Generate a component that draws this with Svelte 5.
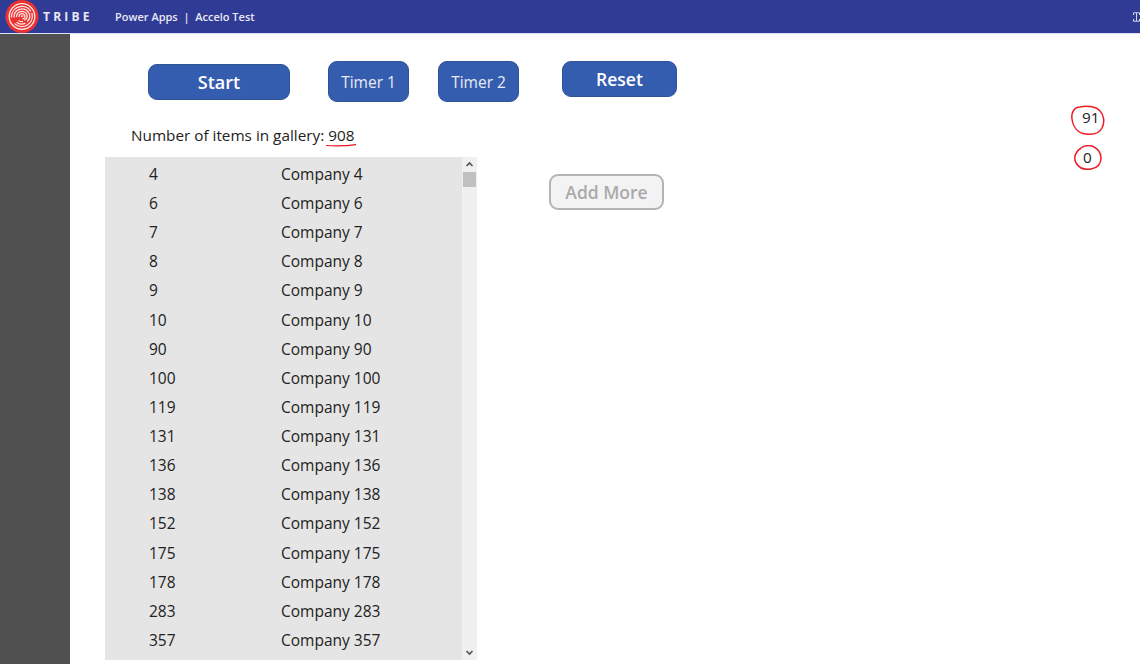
<script>
    let ids = [4, 6, 7, 8, 9, 10, 90, 100, 119, 131, 136, 138, 152, 175, 178, 283, 357]
</script>

<div class='page'>
    <header>
        <svg class='logo' width='34' height='33' viewBox='0 0 34 33'>
            <circle cx='17' cy='16.500' r='16.500' fill='#ea3230'/>
            <g fill='none' stroke='#ffe9e6' stroke-width='1.300' stroke-linecap='round'>
                <circle cx='17' cy='16.500' r='12.800'/>
                <path d='M6.500 17a10.500 10.500 0 0 1 19-6.200'/>
                <path d='M27 13.500a10.500 10.500 0 0 1-17 10.500'/>
                <path d='M9 17a8 8 0 0 1 14.500-4.600 6 6 0 0 1-1 8.600'/>
                <path d='M20 23.400a8 8 0 0 1-8-1'/>
                <path d='M11.500 16.500a5.500 5.500 0 0 1 10-2.800c1 2.300.4 5-1.800 6.200'/>
                <path d='M17.500 21.700a5.500 5.500 0 0 1-3.500-1'/>
                <path d='M14 16.500a3 3 0 0 1 5.700-1.200c.6 1.500-.2 3-1.700 3.500'/>
                <path d='M16.500 16.500a1 1 0 0 1 1.500-.5'/>
            </g>
        </svg>
        <span class='brand'>TRIBE</span>
        <span class='title'>Power Apps &nbsp;|&nbsp; Accelo Test</span>
        <svg class='corner' width='7' height='10' viewBox='0 0 7 10'>
            <path d='M.5 3V.8h6V3M.5 7v2.200h6V7M3.500 1v8' fill='none' stroke='#d5d7e8' stroke-width='1'/>
        </svg>
    </header>
    <div class='body'>
        <aside></aside>
        <main>
            <div class='toolbar'>
                <button class='start'>Start</button>
                <button class='timer'>Timer 1</button>
                <button class='timer second'>Timer 2</button>
                <button class='reset'>Reset</button>
            </div>
            <p class='count'>Number of items in gallery: <span class='total'>908
                <svg class='underline' width='32' height='4' viewBox='0 0 32 4'>
                    <path d='M1 2.500c8 .5 20 .5 30-.9' fill='none' stroke='#e8141c' stroke-width='1.200'/>
                </svg>
            </span></p>
            <div class='lower'>
                <div class='gallery'>
                    <div class='rows'>
                        {#each ids as id (id)}
                            <div class='row'>
                                <span class='id'>{id}</span>
                                <span>Company {id}</span>
                            </div>
                        {/each}
                    </div>
                    <div class='scrollbar'>
                        <svg width='15' height='15' viewBox='0 0 15 15'>
                            <path d='M4.500 9 7.500 6l3 3' fill='none' stroke='#555' stroke-width='1.700'/>
                        </svg>
                        <div class='thumb'></div>
                        <svg class='down' width='15' height='15' viewBox='0 0 15 15'>
                            <path d='M4.500 6l3 3 3-3' fill='none' stroke='#555' stroke-width='1.700'/>
                        </svg>
                    </div>
                </div>
                <button class='more' disabled>Add More</button>
            </div>
            <div class='marks'>
                <div class='mark first'>
                    91
                    <svg width='36' height='32' viewBox='0 0 36 32'>
                        <path d='M10 2C4 2 1 8 2 14c1 8 6 14 14 15 7 1 13 0 16-6 3-6 2-13-2-17C27 2 18 0 10 2' fill='none' stroke='#ef1c24' stroke-width='1.500'/>
                    </svg>
                </div>
                <div class='mark second'>
                    0
                    <svg width='30' height='26' viewBox='0 0 30 26'>
                        <path d='M8 3C3 6 0 12 3 18c3 5 9 7 15 6 6-1 10-5 10-11 0-6-4-10-9-12C15 0 11 1 8 3' fill='none' stroke='#ef1c24' stroke-width='1.500'/>
                    </svg>
                </div>
            </div>
        </main>
    </div>
</div>

<style>
    :global(body) {
        margin: 0;
        background: #fff;
        overflow: hidden;
    }
    .page {
        height: 664px;
        display: flex;
        flex-direction: column;
        font-family: "Open Sans", sans-serif;
        color: #222;
        font-size: 15.300px;
    }
    header {
        height: 33px;
        flex: none;
        display: flex;
        align-items: center;
        background: #303b96;
        border-bottom: 1px solid #dfe1ef;
        color: #e8e9f4;
        padding-left: 5px;
        padding-right: 0;
    }
    .brand {
        margin-left: 4px;
        font-size: 12px;
        font-weight: 700;
        letter-spacing: 3.200px;
        width: 72px;
    }
    .title {
        font-size: 11px;
        font-weight: 600;
    }
    .corner {
        margin-left: auto;
    }
    .body {
        flex: 1;
        display: flex;
        min-height: 0;
    }
    aside {
        width: 70px;
        background: #505050;
    }
    main {
        flex: 1;
        position: relative;
    }
    .toolbar {
        display: flex;
        align-items: flex-start;
        padding: 27px 0 0 78px;
    }
    button {
        font-family: inherit;
        background: #355daf;
        color: #fff;
        border: 1px solid #2f5299;
        border-radius: 9px;
        padding: 0;
    }
    .start {
        width: 142px;
        height: 36px;
        margin-top: 3px;
        font-size: 18px;
        font-weight: 600;
    }
    .timer {
        width: 81px;
        height: 41px;
        margin-left: 38px;
        font-size: 15.500px;
        color: #e8ecf6;
    }
    .timer.second {
        margin-left: 29px;
    }
    .reset {
        width: 115px;
        height: 36px;
        margin-left: 43px;
        font-size: 17.500px;
        font-weight: 600;
    }
    .count {
        margin: 22px 0 0 61px;
        line-height: 22px;
    }
    .total {
        position: relative;
    }
    .underline {
        position: absolute;
        left: -3px;
        top: 18px;
    }
    .lower {
        display: flex;
        align-items: flex-start;
        margin: 11px 0 0 35px;
    }
    .gallery {
        width: 372px;
        height: 503px;
        display: flex;
        background: #e5e5e5;
    }
    .rows {
        flex: 1;
        padding-top: 2.400px;
        font-size: 15.500px;
    }
    .row {
        display: flex;
        height: 29.125px;
        align-items: center;
    }
    .id {
        width: 132px;
        margin-left: 44px;
    }
    .scrollbar {
        width: 15px;
        display: flex;
        flex-direction: column;
        background: #f0f0f0;
    }
    .scrollbar svg {
        display: block;
    }
    .thumb {
        height: 15px;
        margin: 0 1px;
        background: #c0c0c0;
    }
    .down {
        margin-top: auto;
    }
    .more {
        width: 115px;
        height: 36px;
        margin: 17px 0 0 72px;
        background: #f3f3f3;
        border: 2px solid #b4b4b4;
        color: #aaa;
        font-size: 17.500px;
        font-weight: 600;
    }
    .marks {
        position: absolute;
        top: 0;
        left: 0;
    }
    .mark {
        position: absolute;
        line-height: 22px;
        white-space: nowrap;
    }
    .mark svg {
        position: absolute;
    }
    .mark.first {
        left: 1012px;
        top: 72px;
    }
    .mark.first svg {
        left: -12px;
        top: -1px;
    }
    .mark.second {
        left: 1013px;
        top: 112px;
    }
    .mark.second svg {
        left: -10px;
        top: -1px;
    }
</style>
